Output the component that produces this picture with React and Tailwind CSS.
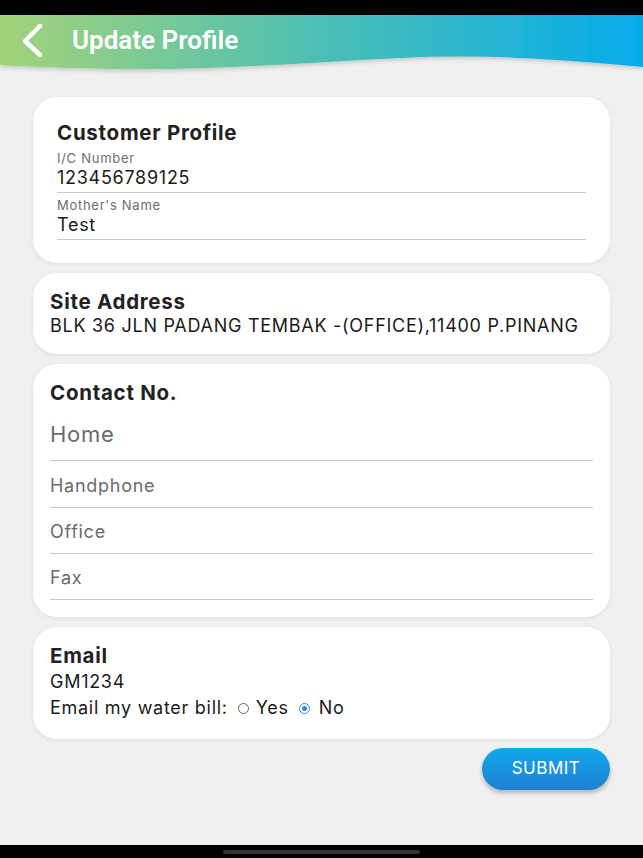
import React from "react";

const Field = ({ label, value }) => (
  <div className="border-b border-[#c8c8c8] pb-[2px]">
    <p className="text-[13px] leading-[15px] text-[#6e6e6e]">{label}</p>
    <p className="text-[18px] leading-[24px] text-[#1a1a1a]">{value}</p>
  </div>
);

const Blank = ({ label, h }) => (
  <div className={`border-b border-[#c8c8c8] flex items-center ${h}`}>
    <span className={h === "h-[56px]" ? "text-[22px] text-[#6b6b6b] pt-[4px]" : "text-[18px] text-[#6b6b6b] pt-[2px]"}>
      {label}
    </span>
  </div>
);

const Radio = ({ on }) => (
  <span
    className={`w-[11px] h-[11px] rounded-full border flex items-center justify-center ${
      on ? "border-[#2a8be0]" : "border-[#666]"
    }`}
  >
    {on && <span className="w-[5px] h-[5px] rounded-full bg-[#2a8be0]" />}
  </span>
);

const App = () => {
  return (
    <div
      className="w-[643px] h-[858px] bg-[#f0f0f0] flex flex-col overflow-hidden tracking-[0.045em]"
      style={{ fontFamily: "Inter, 'Noto Sans', sans-serif" }}
    >
      {/* status bar */}
      <div className="h-[15px] bg-black shrink-0" />

      {/* Header with wave */}
      <div className="relative h-[60px] shrink-0">
        <svg className="absolute inset-0" width="643" height="60" viewBox="0 0 643 60">
          <defs>
            <linearGradient id="hg" x1="0" x2="1" y1="0" y2="0">
              <stop offset="0" stopColor="#a3d37a" />
              <stop offset="0.5" stopColor="#4cbfb4" />
              <stop offset="1" stopColor="#05abec" />
            </linearGradient>
            <filter id="sh" x="-5%" y="-20%" width="110%" height="150%">
              <feDropShadow dx="0" dy="2" stdDeviation="2" floodColor="#000" floodOpacity="0.18" />
            </filter>
          </defs>
          <path
            d="M0 0 H643 V52 C560 44 480 39 400 43 C300 48 200 56 110 54 C60 53 20 51 0 50 Z"
            fill="url(#hg)"
            filter="url(#sh)"
          />
        </svg>
        <div className="relative flex items-center h-[50px]">
          <svg className="ml-[20px]" width="24" height="34" viewBox="0 0 24 34">
            <path d="M20 3 L5 18 L20 32" fill="none" stroke="#fff" strokeWidth="4.5" strokeLinecap="round" strokeLinejoin="round" />
          </svg>
          <h1
            className="ml-[28px] text-white text-[26px] font-semibold tracking-normal"
            style={{ fontFamily: "Roboto, sans-serif" }}
          >
            Update Profile
          </h1>
        </div>
      </div>

      <div className="flex flex-col gap-[10px] px-[33px] pt-[22px]">
        {/* Customer Profile */}
        <div className="bg-white rounded-[24px] shadow-[0_1px_4px_rgba(0,0,0,0.08)] pl-[24px] pr-[24px] pt-[24px] pb-[23px]">
          <h2 className="text-[20.5px] leading-[24px] font-bold text-[#222] mb-[6px]">Customer Profile</h2>
          <div className="flex flex-col gap-[5px]">
            <Field label="I/C Number" value="123456789125" />
            <Field label="Mother's Name" value="Test" />
          </div>
        </div>

        {/* Site Address */}
        <div className="bg-white rounded-[24px] shadow-[0_1px_4px_rgba(0,0,0,0.08)] px-[17px] pt-[17px] pb-[16px]">
          <h2 className="text-[20.5px] leading-[24px] font-bold text-[#222]">Site Address</h2>
          <p className="text-[18px] leading-[24px] text-[#1a1a1a]">
            BLK 36 JLN PADANG TEMBAK -(OFFICE),11400 P.PINANG
          </p>
        </div>

        {/* Contact */}
        <div className="bg-white rounded-[24px] shadow-[0_1px_4px_rgba(0,0,0,0.08)] px-[17px] pt-[17px] pb-[17px]">
          <h2 className="text-[20.5px] leading-[24px] font-bold text-[#222]">Contact No.</h2>
          <Blank label="Home" h="h-[56px]" />
          <Blank label="Handphone" h="h-[47px]" />
          <Blank label="Office" h="h-[46px]" />
          <Blank label="Fax" h="h-[46px]" />
        </div>

        {/* Email */}
        <div className="bg-white rounded-[24px] shadow-[0_1px_4px_rgba(0,0,0,0.08)] px-[17px] pt-[17px] pb-[18px]">
          <h2 className="text-[20.5px] leading-[24px] font-bold text-[#222]">Email</h2>
          <p className="text-[18px] leading-[26px] text-[#1a1a1a] pt-[1px]">GM1234</p>
          <div className="flex items-center text-[18px] leading-[26px] text-[#1a1a1a]">
            <span>Email my water bill:</span>
            <span className="ml-[10px]"><Radio /></span>
            <span className="ml-[7px]">Yes</span>
            <span className="ml-[10px]"><Radio on /></span>
            <span className="ml-[9px]">No</span>
          </div>
        </div>

        <div className="flex justify-end -mt-[1px]">
          <button className="w-[128px] h-[42px] rounded-full bg-gradient-to-b from-[#10a9ea] to-[#1e80d2] text-white text-[17px] tracking-[0.03em] shadow-[0_3px_4px_rgba(0,0,0,0.25)]">
            SUBMIT
          </button>
        </div>
      </div>

      <div className="flex-1" />
      <div className="h-[13px] bg-black shrink-0 flex justify-center items-center">
        <div className="w-[197px] h-[4px] rounded-full bg-[#333]" />
      </div>
    </div>
  );
};

export default App;
